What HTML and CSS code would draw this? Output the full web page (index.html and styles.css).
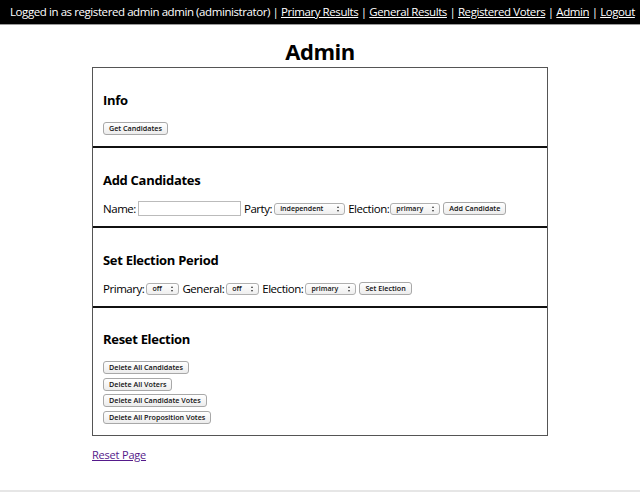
FILE: index.html
```html
<!DOCTYPE html>
<html>
<head>
<meta charset="utf-8">
<title>Admin</title>
<link rel="stylesheet" href="styles.css">
</head>
<body>
<div class="topbar">
  Logged in as registered admin admin (administrator) | <a href="#">Primary Results</a> | <a href="#">General Results</a> | <a href="#">Registered Voters</a> | <a href="#">Admin</a> | <a href="#">Logout</a>
</div>
<main class="page">
  <h1 class="title">Admin</h1>
  <div class="panel">
    <section class="section">
      <h3 class="heading">Info</h3>
      <div class="row">
        <button class="btn">Get Candidates</button>
      </div>
    </section>
    <section class="section">
      <h3 class="heading">Add Candidates</h3>
      <div class="row">
        <span class="label">Name:</span>
        <input class="text-input" type="text">
        <span class="label">Party:</span>
        <span class="sel sel-party"><select><option>independent</option></select></span>
        <span class="label label-tight">Election:</span>
        <span class="sel sel-election1"><select><option>primary</option></select></span>
        <button class="btn">Add Candidate</button>
      </div>
    </section>
    <section class="section">
      <h3 class="heading">Set Election Period</h3>
      <div class="row">
        <span class="label">Primary:</span>
        <span class="sel sel-off"><select><option>off</option></select></span>
        <span class="label">General:</span>
        <span class="sel sel-off"><select><option>off</option></select></span>
        <span class="label">Election:</span>
        <span class="sel sel-election2"><select><option>primary</option></select></span>
        <button class="btn">Set Election</button>
      </div>
    </section>
    <section class="section section-last">
      <h3 class="heading heading-last">Reset Election</h3>
      <div class="stack">
        <button class="btn">Delete All Candidates</button>
        <button class="btn">Delete All Voters</button>
        <button class="btn">Delete All Candidate Votes</button>
        <button class="btn">Delete All Proposition Votes</button>
      </div>
    </section>
  </div>
  <a class="reset" href="#">Reset Page</a>
</main>
<div class="footer"></div>
</body>
</html>
```
FILE: styles.css
```css
html, body {
  margin: 0;
  padding: 0;
  background: #fff;
  font-family: "Open Sans", "DejaVu Sans", sans-serif;
  color: #000;
}
body {
  height: 493px;
  overflow: hidden;
  display: flex;
  flex-direction: column;
}
.topbar {
  background: #000;
  color: #fff;
  font-size: 11.5px;
  height: 24px;
  line-height: 24px;
  padding: 0 10px;
  border-bottom: 1px solid #9a9a9a;
  white-space: nowrap;
  letter-spacing: -0.42px;
}
.topbar a {
  color: #fff;
  text-decoration: underline;
}
.page {
  width: 456px;
  margin: 0 auto;
  flex: 1;
}
.title {
  font-size: 22px;
  font-weight: 700;
  text-align: center;
  margin: 12px 0 2px;
  line-height: 28px;
  letter-spacing: -0.5px;
}
.panel {
  border: 1px solid #555;
}
.section {
  height: 80px;
  box-sizing: border-box;
  padding: 23px 10px 0;
  border-bottom: 2px solid #111;
}
.section-last {
  height: 127px;
  border-bottom: none;
}
.heading {
  font-size: 13px;
  font-weight: 700;
  margin: 0 0 12px;
  line-height: 18px;
  letter-spacing: -0.3px;
}
.heading-last {
  margin-top: -1px;
  margin-bottom: 13px;
}
.btn {
  font-family: "Open Sans", "DejaVu Sans", sans-serif;
  font-weight: 600;
  font-size: 7.2px;
  height: 13px;
  line-height: 11px;
  padding: 0 5px;
  border: 1px solid #a8a8a8;
  border-radius: 3px;
  background: linear-gradient(#ffffff, #ececec);
  color: #111;
  margin: 0;
  white-space: nowrap;
  box-sizing: border-box;
}
.row {
  display: flex;
  align-items: center;
  font-size: 11.5px;
  letter-spacing: -0.45px;
  height: 15px;
  white-space: nowrap;
}
.label {
  margin-right: 2px;
}
.label-tight {
  margin-right: 1px;
}
.text-input {
  width: 103px;
  height: 15px;
  box-sizing: border-box;
  border: 1px solid #bbb;
  margin: 0 3px 0 0;
  padding: 0;
}
.sel {
  position: relative;
  display: inline-block;
  margin-right: 3px;
}
.sel select {
  appearance: none;
  -webkit-appearance: none;
  font-family: "Open Sans", "DejaVu Sans", sans-serif;
  font-weight: 600;
  font-size: 7px;
  letter-spacing: 0;
  height: 12px;
  line-height: 10px;
  padding: 0 0 0 5px;
  border: 1px solid #b0b0b0;
  border-radius: 3px;
  background: linear-gradient(#ffffff, #eeeeee);
  color: #111;
  display: block;
  box-sizing: border-box;
}
.sel::after {
  content: "";
  position: absolute;
  right: 6px;
  top: 3px;
  width: 0;
  height: 0;
  border-left: 1.5px solid transparent;
  border-right: 1.5px solid transparent;
  border-bottom: 2px solid #333;
}
.sel::before {
  content: "";
  position: absolute;
  right: 6px;
  bottom: 3px;
  width: 0;
  height: 0;
  border-left: 1.5px solid transparent;
  border-right: 1.5px solid transparent;
  border-top: 2px solid #333;
}
.sel-party select { width: 71px; }
.sel-election1 select { width: 50px; }
.sel-election2 select { width: 51px; }
.sel-off select { width: 33px; }
.stack {
  display: flex;
  flex-direction: column;
  align-items: flex-start;
  gap: 3.5px;
}
.reset {
  display: inline-block;
  margin-top: 11px;
  font-size: 11px;
  letter-spacing: -0.2px;
  color: #551a8b;
}
.footer {
  height: 2px;
  background: #e6e6e6;
  margin-bottom: 1px;
}
```
